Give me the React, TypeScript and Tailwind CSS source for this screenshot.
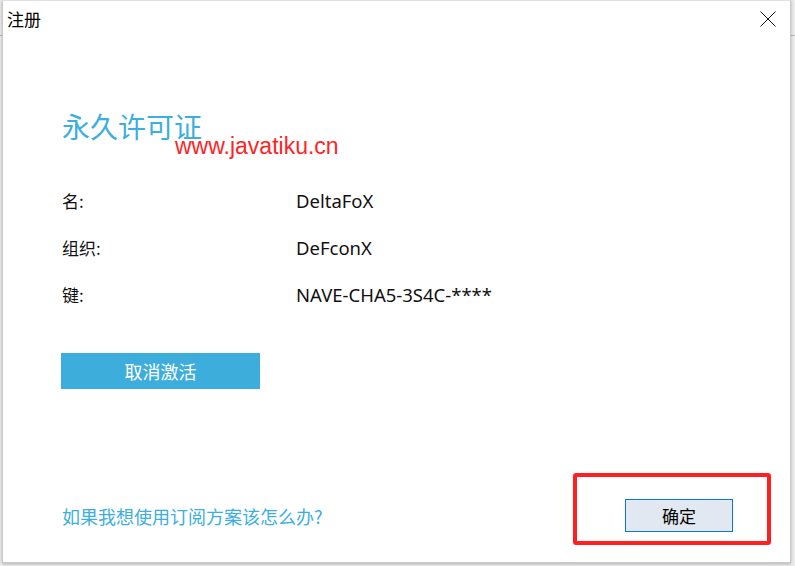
import React from "react";

const cjk = { fontFamily: '"Noto Sans CJK SC", "Noto Sans", sans-serif' };
const latin = { fontFamily: '"Noto Sans", "Noto Sans CJK SC", sans-serif' };

export default function App() {
  return (
    <div className="w-[795px] h-[566px] bg-[#ececec] overflow-hidden relative">
      {/* background window hint */}
      <div className="absolute left-0 top-[35px] w-[795px] h-px bg-[#b9b9b9]" />
      <div className="absolute left-[2px] top-0 w-[789px] h-[563px] bg-white border border-[#c9c9c9] border-t-[#e2e2e2] flex flex-col shadow-[0_1px_3px_rgba(0,0,0,0.25)]">
        {/* title bar */}
        <div className="h-[36px] flex items-start justify-between">
          <div className="pl-[4px] pt-[6px] text-[17px] leading-[24px] text-black" style={cjk}>注册</div>
          <div className="pr-[14px] pt-[10px]">
            <svg width="16" height="16" viewBox="0 0 16 16">
              <path d="M0.5 0.5 L15.5 15.5 M15.5 0.5 L0.5 15.5" stroke="#111" strokeWidth="1" fill="none" />
            </svg>
          </div>
        </div>
        {/* content */}
        <div className="flex flex-col pl-[58px] flex-1">
          <div className="mt-[71px] relative h-[40px] pl-px">
            <div className="text-[28px] leading-[36px] text-[#3caedf]" style={cjk}>永久许可证</div>
            <div
              className="absolute left-[114px] top-[25px] text-[23px] leading-[27px] text-[#ff2424]"
              style={{ fontFamily: '"Liberation Sans", Arial, sans-serif' }}
            >
              www.javatiku.cn
            </div>
          </div>
          <div className="mt-[40px] flex flex-col gap-[21px] pl-px">
            {[
              ["名:", "DeltaFoX"],
              ["组织:", "DeFconX"],
              ["键:", "NAVE-CHA5-3S4C-****"],
            ].map(([k, v]) => (
              <div key={k} className="flex items-center h-[26px]">
                <div className="w-[234px] text-[17px] text-[#111]" style={cjk}>{k}</div>
                <div className="text-[18.5px] text-[#111]" style={latin}>{v}</div>
              </div>
            ))}
          </div>
          <div className="mt-[45px]">
            <button className="w-[199px] h-[36px] bg-[#3daedb] text-white text-[18px] leading-[36px]" style={cjk}>
              取消激活
            </button>
          </div>
          <div className="mt-auto mb-[30px] flex items-end justify-between pr-[57px] pl-px">
            <div className="text-[18px] leading-[24px] text-[#3caedf] mb-[4px]" style={cjk}>如果我想使用订阅方案该怎么办?</div>
            <div className="relative">
              <button className="w-[108px] h-[33px] bg-[#e1e8f1] border border-[#0a78d6] text-[17px] text-black" style={cjk}>
                确定
              </button>
              <div className="absolute left-[-52px] top-[-26px] w-[198px] h-[72px] border-[4px] border-[#ff1f1f] rounded-[3px]" />
            </div>
          </div>
        </div>
      </div>
    </div>
  );
}
